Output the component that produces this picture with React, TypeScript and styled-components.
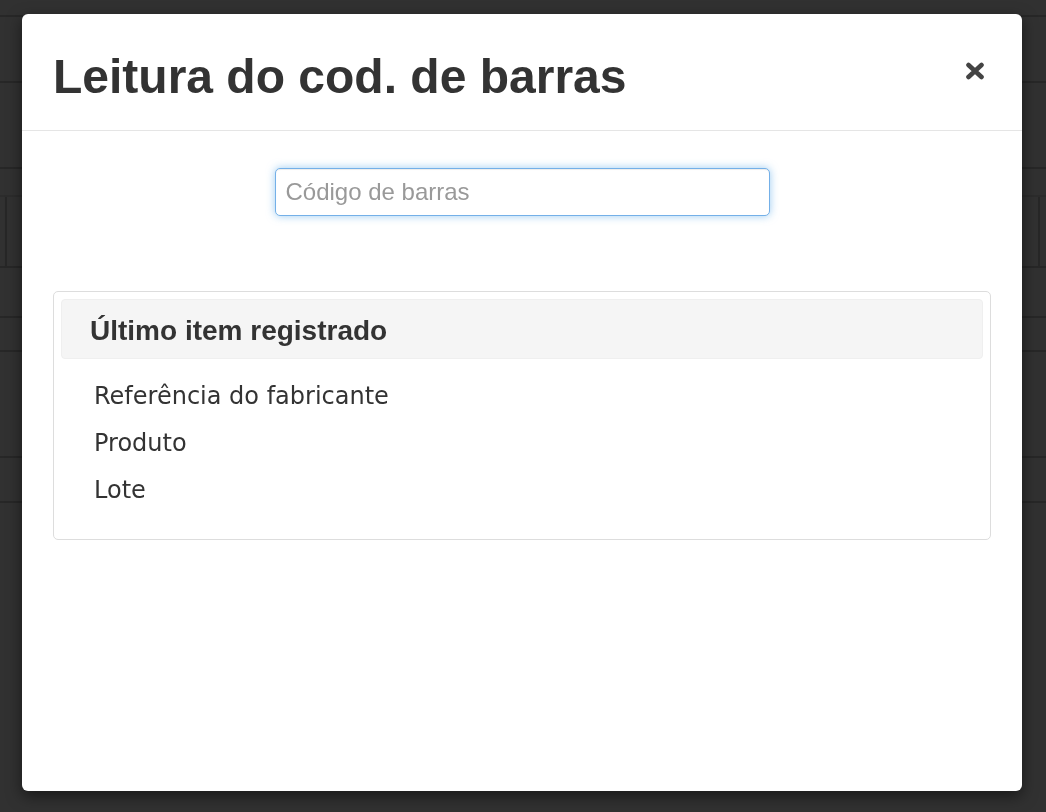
import React from 'react';
import styled, { createGlobalStyle } from 'styled-components';

const GlobalStyle = createGlobalStyle`
  html, body {
    margin: 0;
    padding: 0;
    background: #313131;
    font-family: "Liberation Sans", Arial, Helvetica, sans-serif;
    color: #333;
  }
  * {
    box-sizing: border-box;
  }
`;

const rows = [
  { height: 17 },
  { height: 66 },
  { height: 86 },
  { height: 28, faint: true },
  { height: 71, split: true },
  { height: 50 },
  { height: 34 },
  { height: 106 },
  { height: 45 },
];

const fields = ['Referência do fabricante', 'Produto', 'Lote'];

const CloseIcon: React.FC = () => (
  <svg width="20" height="18" viewBox="0 0 20 18" aria-hidden="true">
    <path
      d="M3.5 3 L16.5 15 M16.5 3 L3.5 15"
      stroke="#3a3a3a"
      strokeWidth="4.6"
      strokeLinecap="round"
      fill="none"
    />
  </svg>
);

export default function App() {
  return (
    <>
      <GlobalStyle />
      <Backdrop>
        {rows.map((row, i) => (
          <BackdropRow key={i} $height={row.height} $faint={row.faint}>
            {row.split && (
              <>
                <BackdropCell $side="left" />
                <BackdropCell $side="right" />
              </>
            )}
          </BackdropRow>
        ))}
      </Backdrop>
      <Overlay>
        <Dialog role="dialog" aria-labelledby="barcode-title">
          <Header>
            <Title id="barcode-title">Leitura do cod. de barras</Title>
            <CloseButton type="button" aria-label="Fechar">
              <CloseIcon />
            </CloseButton>
          </Header>
          <Body>
            <BarcodeInput type="text" placeholder="Código de barras" autoFocus />
            <Panel>
              <PanelHeading>Último item registrado</PanelHeading>
              <FieldList>
                {fields.map((field) => (
                  <FieldItem key={field}>{field}</FieldItem>
                ))}
              </FieldList>
            </Panel>
          </Body>
        </Dialog>
      </Overlay>
    </>
  );
}

const Backdrop = styled.div`
  display: flex;
  flex-direction: column;
  height: 812px;
  overflow: hidden;
`;

const BackdropRow = styled.div<{ $height: number; $faint?: boolean }>`
  height: ${(p) => p.$height}px;
  flex-shrink: 0;
  display: flex;
  justify-content: space-between;
  border-bottom: 2px solid ${(p) => (p.$faint ? '#2c2c2c' : '#272727')};
`;

const BackdropCell = styled.div<{ $side: 'left' | 'right' }>`
  width: ${(p) => (p.$side === 'left' ? 7 : 8)}px;
  ${(p) =>
    p.$side === 'left' ? 'border-right: 2px solid #272727;' : 'border-left: 2px solid #272727;'}
`;

const Overlay = styled.div`
  position: fixed;
  inset: 0;
  display: flex;
  justify-content: flex-start;
  align-items: flex-start;
  padding: 14px 0 0 22px;
`;

const Dialog = styled.div`
  width: 1000px;
  height: 777px;
  background: #fff;
  border-radius: 6px;
  box-shadow: 0 5px 15px rgba(0, 0, 0, 0.5);
  display: flex;
  flex-direction: column;
`;

const Header = styled.div`
  height: 117px;
  padding: 0 37px 0 31px;
  border-bottom: 1px solid #e5e5e5;
  display: flex;
  align-items: center;
  justify-content: space-between;
`;

const Title = styled.h1`
  margin: 10px 0 0;
  font-size: 48px;
  line-height: 1;
  font-weight: 700;
  color: #333;
`;

const CloseButton = styled.button`
  border: 0;
  background: none;
  padding: 0;
  margin-bottom: 2px;
  display: flex;
  cursor: pointer;
  opacity: 0.95;
`;

const Body = styled.div`
  padding: 37px 31px 0;
  display: flex;
  flex-direction: column;
`;

const BarcodeInput = styled.input`
  display: block;
  align-self: center;
  width: 495px;
  height: 48px;
  padding: 0 10px;
  font-family: "Liberation Sans", Arial, Helvetica, sans-serif;
  font-size: 24px;
  color: #555;
  background: #fff;
  border: 1px solid #74b0e8;
  border-radius: 5px;
  outline: none;
  box-shadow: inset 0 1px 1px rgba(0, 0, 0, 0.075), 0 0 9px rgba(102, 175, 233, 0.65);
  caret-color: #222;

  &::placeholder {
    color: #999;
  }
`;

const Panel = styled.div`
  margin-top: 75px;
  border: 1px solid #ddd;
  border-radius: 5px;
  padding: 7px;
`;

const PanelHeading = styled.div`
  height: 60px;
  padding: 3px 27px 0 28px;
  display: flex;
  align-items: center;
  background: #f5f5f5;
  border: 1px solid #efefef;
  border-radius: 4px;
  font-size: 28px;
  font-weight: 700;
  color: #333;
`;

const FieldList = styled.ul`
  list-style: none;
  margin: 0;
  padding: 14px 0 18px 33px;
`;

const FieldItem = styled.li`
  font-family: "DejaVu Sans", Verdana, sans-serif;
  font-size: 24px;
  line-height: 47px;
  color: #333;
`;
